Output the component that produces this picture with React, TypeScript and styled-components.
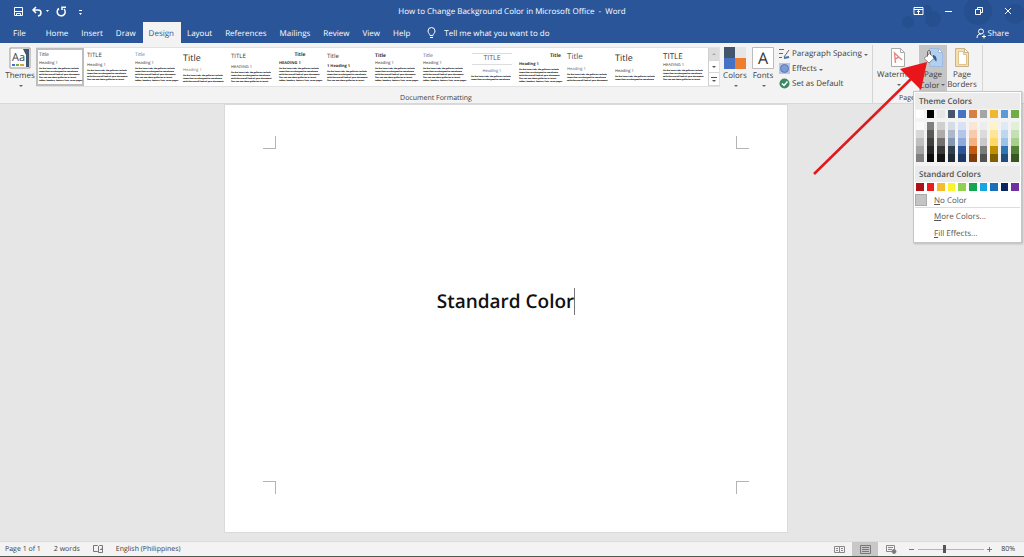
import React from 'react';
import styled, { createGlobalStyle, css } from 'styled-components';

const Global = createGlobalStyle`
  *, *::before, *::after { box-sizing: border-box; }
  body {
    margin: 0;
    font-family: "Open Sans", "Noto Sans", sans-serif;
    font-size: 8px;
    color: #3c3c3c;
    background: #e6e6e6;
    text-rendering: geometricPrecision;
  }
  button, input { font: inherit; color: inherit; text-rendering: inherit; }
  button { border: 0; padding: 0; background: none; }
`;

const Shell = styled.div`
  min-height: 100vh;
  display: flex;
  flex-direction: column;
`;

const Header = styled.header`
  position: relative;
  background: #2a5699;
  color: #fff;
`;

const Blobs = styled.svg`
  position: absolute;
  right: 0;
  top: 0;
`;

const TitleBar = styled.div`
  position: relative;
  height: 22px;
  display: flex;
  align-items: center;
  justify-content: space-between;
`;

const QuickAccess = styled.div`
  display: flex;
  align-items: center;
  padding-left: 13px;
  gap: 7px;
`;

const WindowTitle = styled.h1`
  position: absolute;
  left: 0;
  right: 0;
  margin: 0;
  text-align: center;
  font-size: 8px;
  font-weight: 400;
  white-space: pre;
`;

const WindowControls = styled.div`
  position: relative;
  display: flex;
  gap: 19px;
  padding-right: 10px;
`;

const IconButton = styled.button`
  display: flex;
  align-items: center;
  justify-content: center;
`;

const Tabs = styled.nav`
  position: relative;
  height: 21px;
  display: flex;
  align-items: stretch;
  padding-left: 3px;
`;

const Tab = styled.button<{ $active?: boolean; $wide?: boolean }>`
  padding: 1px ${p => (p.$wide ? 14 : 7)}px 0 ${p => (p.$wide ? 10 : 6)}px;
  font-size: 8px;
  color: ${p => (p.$active ? '#2a5699' : '#fff')};
  background: ${p => (p.$active ? '#f3f3f3' : 'transparent')};
`;

const TellMe = styled.button`
  display: flex;
  align-items: center;
  gap: 8px;
  padding: 1px 0 0 10px;
  font-size: 8px;
  color: #fff;
`;

const Share = styled(TellMe)`
  margin-left: auto;
  padding-right: 15px;
  gap: 2px;
`;

const Ribbon = styled.section`
  height: 61px;
  display: flex;
  background: #f3f3f3;
  border-bottom: 1px solid #d8d8d8;
`;

const Group = styled.div<{ $w: number }>`
  flex: 0 0 ${p => p.$w}px;
  display: flex;
  flex-direction: column;
  justify-content: space-between;
  border-right: 1px solid #d4d4d4;
  margin: 2px 0 0;
`;

const GroupBody = styled.div`
  display: flex;
  align-items: flex-start;
  padding-left: 4px;
`;

const GroupName = styled.div`
  text-align: center;
  font-size: 7px;
  line-height: 8px;
`;

const BigButton = styled.button<{ $w: number; $on?: boolean }>`
  width: ${p => p.$w}px;
  height: 47px;
  display: flex;
  flex-direction: column;
  align-items: center;
  padding-top: 2px;
  font-size: 8px;
  line-height: 10px;
  white-space: nowrap;
  background: ${p => (p.$on ? '#c5c5c5' : 'transparent')};
  svg.pic { margin-bottom: 2px; flex: none; }
`;

const Caret = styled.span`
  display: inline-block;
  width: 0;
  height: 0;
  margin: 4px 1px 2px 2px;
  border: 2px solid transparent;
  border-top-color: #666;
  border-bottom: 0;
`;

const Gallery = styled.div`
  height: 40px;
  margin-top: 2px;
  display: flex;
  background: #fff;
  border: 1px solid #e1e1e1;
  border-left: 0;
`;

const Thumb = styled.button<{ $on?: boolean }>`
  width: 48px;
  height: 38px;
  padding: 2px 3px 0;
  overflow: hidden;
  text-align: left;
  display: flex;
  flex-direction: column;
  justify-content: flex-start;
  ${p => p.$on && css`box-shadow: inset 0 0 0 2px #bdbdbd;`}
`;

const ThumbTitle = styled.span<{ $size: number; $top: number; $color?: string; $align?: string; $rule?: boolean; $bold?: boolean }>`
  margin-top: ${p => p.$top}px;
  font-size: ${p => p.$size}px;
  line-height: 10px;
  color: ${p => p.$color || '#333'};
  text-align: ${p => p.$align || 'left'};
  font-weight: ${p => (p.$bold ? 700 : 400)};
  ${p => p.$rule && css`box-shadow: 0 -2px 0 -1px #ddd, 0 2px 0 -1px #ddd;`}
`;

const ThumbHeading = styled.span<{ $color?: string; $align?: string; $bold?: boolean; $gap: number }>`
  margin-top: ${p => p.$gap}px;
  font-size: 4px;
  line-height: 6px;
  color: ${p => p.$color || '#333'};
  text-align: ${p => p.$align || 'left'};
  font-weight: ${p => (p.$bold ? 700 : 400)};
`;

const ThumbText = styled.span`
  font-size: 2px;
  line-height: 3px;
  font-weight: 800;
  color: #000;
  white-space: pre;
`;

const GalleryScroll = styled.div`
  width: 11px;
  display: flex;
  flex-direction: column;
  border-left: 1px solid #d0d0d0;
`;

const ScrollButton = styled.button<{ $off?: boolean }>`
  flex: 1;
  display: flex;
  align-items: center;
  justify-content: center;
  background: ${p => (p.$off ? '#dcdcdc' : '#fff')};
  border-bottom: 1px solid #d8d8d8;
`;

const SmallButtons = styled.div`
  display: flex;
  flex-direction: column;
  padding: 1px 0 0 3px;
`;

const SmallButton = styled.button`
  height: 15px;
  display: flex;
  align-items: center;
  gap: 2px;
  font-size: 8px;
  white-space: nowrap;
  span { display: flex; align-items: center; }
`;

const Workspace = styled.main`
  flex: 1;
  display: flex;
  justify-content: center;
  padding: 1px 12px 9px 0;
  background: #e6e6e6;
`;

const Sheet = styled.article`
  position: relative;
  width: 562px;
  min-height: 400px;
  background: #fff;
  box-shadow: 0 0 0 1px #dadada;
  padding-bottom: 34px;
  display: flex;
  align-items: center;
  justify-content: center;
`;

const Corner = styled.i<{ $v: 'top' | 'bottom'; $h: 'left' | 'right' }>`
  position: absolute;
  width: 13px;
  height: 13px;
  ${p => p.$v}: ${p => (p.$v === 'top' ? 31 : 38)}px;
  ${p => p.$h}: 38px;
  border: 0 solid #b4b4b4;
  border-${p => (p.$v === 'top' ? 'bottom' : 'top')}-width: 1px;
  border-${p => (p.$h === 'left' ? 'right' : 'left')}-width: 1px;
`;

const DocText = styled.p`
  margin: 0;
  font-size: 19px;
  line-height: 27px;
  font-weight: 600;
  color: #111;
  border-right: 1px solid #777;
`;

const StatusBar = styled.footer`
  height: 16px;
  display: flex;
  align-items: center;
  justify-content: space-between;
  background: #f3f3f3;
  border-top: 1px solid #dcdcdc;
  border-bottom: 1px solid #4d5a50;
  font-size: 7px;
`;

const StatusSide = styled.div<{ $gap: number }>`
  height: 100%;
  display: flex;
  align-items: center;
  gap: ${p => p.$gap}px;
  padding: 0 9px 0 5px;
`;

const ViewButton = styled(IconButton)<{ $on?: boolean }>`
  width: 26px;
  height: 100%;
  background: ${p => (p.$on ? '#c8c8c8' : 'transparent')};
`;

const ZoomSlider = styled.input`
  appearance: none;
  width: 66px;
  height: 10px;
  margin: 0;
  background: linear-gradient(#b5b5b5, #b5b5b5) center / 100% 1px no-repeat;
  &::-webkit-slider-thumb { appearance: none; width: 3px; height: 8px; background: #555; }
`;

const Percent = styled.span`
  padding-left: 5px;
`;

const Menu = styled.div`
  position: absolute;
  top: 91px;
  right: 2px;
  width: 109px;
  padding: 1px;
  background: #fff;
  border: 1px solid #c6c6c6;
  box-shadow: 1px 1px 2px #0003;
`;

const MenuTitle = styled.h2`
  margin: 0;
  padding-left: 4px;
  height: 16px;
  font-size: 8px;
  line-height: 17px;
  font-weight: 600;
  color: #505050;
  background: #ebebeb;
`;

const Swatches = styled.div<{ $bottom?: number; $shade?: boolean }>`
  display: grid;
  grid-template-columns: repeat(10, 1fr);
  column-gap: 3px;
  padding: 1px 1px ${p => p.$bottom || 2}px;
  background: ${p => (p.$shade ? '#f3f3f3' : '#fff')};
`;

const Swatch = styled.button<{ $c: string }>`
  height: 8px;
  background: ${p => p.$c};
`;

const MenuItem = styled.button<{ $line?: boolean }>`
  display: flex;
  align-items: center;
  width: 100%;
  height: ${p => (p.$line ? 18 : 16)}px;
  gap: 7px;
  font-size: 8px;
  color: #555;
  border-top: ${p => (p.$line ? '1px solid #ddd' : '0')};
  &::before { content: ""; width: 12px; height: 12px; }
`;

const NoColor = styled(MenuItem)`
  height: 14px;
  &::before { background: #c4c4c4; border: 1px solid #aaa; }
`;

const Arrow = styled.svg`
  position: absolute;
  top: 60px;
  right: 84px;
  pointer-events: none;
`;

const BODY = [
  'On the Insert tab, the galleries include',
  'items that are designed to coordinate',
  'with the overall look of your document.',
  'You can use these galleries to insert',
  'tables, headers, footers, lists, cover pages',
];

type ThumbSpec = {
  title?: string; size: number; top: number; color?: string; align?: string; bold?: boolean; rule?: boolean;
  heading?: string; hColor?: string; hAlign?: string; hBold?: boolean; gap: number; rows: number; on?: boolean;
};

const THUMBS: ThumbSpec[] = [
  { size: 5, top: 0, gap: 1, rows: 5, on: true },
  { title: 'TITLE', size: 6, top: 0, gap: 3, rows: 4 },
  { size: 5, top: 0, color: '#4a7ab0', gap: 1, rows: 5 },
  { size: 9, top: 3, gap: 5, rows: 3, hColor: '#777' },
  { title: 'TITLE', size: 6, top: 1, gap: 4, rows: 4, heading: 'HEADING 1' },
  { size: 5, top: 0, align: 'center', bold: true, gap: 1, rows: 5, heading: 'HEADING 1', hBold: true },
  { size: 6, top: 1, gap: 3, rows: 4, heading: '1   Heading 1', hBold: true },
  { size: 5, top: 1, bold: true, gap: 0, rows: 5 },
  { size: 5, top: 1, color: '#555577', gap: 0, rows: 5 },
  { title: 'TITLE', size: 7, top: 4, align: 'center', rule: true, gap: 5, rows: 2, color: '#555577', hAlign: 'center', hColor: '#4a6a90' },
  { size: 5, top: 1, align: 'right', bold: true, gap: 1, rows: 5, hBold: true },
  { size: 8, top: 2, color: '#44546a', gap: 5, rows: 3, hColor: '#4a6a90' },
  { size: 9, top: 3, gap: 6, rows: 2 },
  { title: 'TITLE', size: 8, top: 2, gap: 1, rows: 4, heading: 'HEADING 1' },
];

const TOP = ['#ffffff', '#000000', '#e7e6e6', '#44546a', '#4472c4', '#d87f45', '#a5a5a5', '#f0b92d', '#5b9bd5', '#70ad47'];
const SHADES = [
  ['#fafafa', '#7f7f7f', '#d0cece', '#d6dce4', '#d9e2f3', '#fbe5d5', '#ededed', '#fff2cc', '#deebf6', '#e2efd9'],
  ['#d8d8d8', '#595959', '#aeabab', '#adb9ca', '#b4c6e7', '#f7cbac', '#dbdbdb', '#fee599', '#bdd7ee', '#c5e0b3'],
  ['#bfbfbf', '#3f3f3f', '#757070', '#8496b0', '#8eaadb', '#f4b183', '#c9c9c9', '#ffd965', '#9cc3e5', '#a8d08d'],
  ['#a5a5a5', '#262626', '#3a3838', '#323f4f', '#2f5496', '#c55a11', '#7b7b7b', '#bf9000', '#2e75b5', '#538135'],
  ['#7f7f7f', '#0c0c0c', '#171616', '#222a35', '#1f3864', '#833c0b', '#525252', '#7f6000', '#1e4e79', '#375623'],
];
const STANDARD = ['#b01116', '#ee1c1c', '#f5bd2a', '#fbf32b', '#92d050', '#12a650', '#18a5e0', '#1a6fb8', '#0a2560', '#7030a0'];

const WatermarkIcon = () => (
  <svg className="pic" width="22" height="21" viewBox="0 0 22 21" fill="none">
    <path d="M4.500 1.500h9l4 4v14h-13z" fill="#fff" stroke="#aaa" />
    <path d="M13.500 1.500v4h4" stroke="#aaa" />
    <path d="M8.500 16L7.500 6l7.500 7M8 12l4-2" stroke="#e08a80" strokeWidth="1.400" />
  </svg>
);

const PageColorIcon = () => (
  <svg className="pic" width="22" height="21" viewBox="0 0 22 21" fill="none">
    <path d="M7.500 1.500h9l4 4v14h-13z" fill="#b4cfec" stroke="#9dbbe0" />
    <path d="M16.500 1.500v4h4z" fill="#fff" stroke="#9dbbe0" />
    <path d="M2 11.500l5.500-5 5 4.500-5.500 5z" fill="#fff" stroke="#8a8a8a" />
    <path d="M5.500 9.500V5c0-2 3-2 3 0v3" stroke="#666" />
    <path d="M11 8c3 .5 4 3 3.500 6.500-2-.5-2-3-3.500-4z" fill="#2c5f9a" />
  </svg>
);

const BordersIcon = () => (
  <svg className="pic" width="22" height="21" viewBox="0 0 22 21" fill="none">
    <path d="M4.500 1.500h9l4 4v14h-13z" fill="#f6dfae" stroke="#c9b48c" />
    <path d="M7.500 4.500h5v3h3v10h-8z" fill="#fff" stroke="#e0c48c" />
    <path d="M13.500 1.500v4h4z" fill="#fff" stroke="#c9b48c" />
  </svg>
);

export default function App() {
  return (
    <Shell>
      <Global />
      <Header>
        <Blobs width="130" height="43" fill="#1f4785" opacity=".45">
          <circle cx="14" cy="22" r="6" /><circle cx="39" cy="19" r="8" /><circle cx="33" cy="10" r="5" />
          <circle cx="84" cy="11" r="14" /><circle cx="121" cy="14" r="10" />
        </Blobs>
        <TitleBar>
          <WindowTitle>How to Change Background Color in Microsoft Office  -  Word</WindowTitle>
          <QuickAccess>
            <IconButton aria-label="Save">
              <svg width="11" height="11" viewBox="0 0 11 11" fill="none" stroke="#fff"><path d="M1.500 1.500h8v8h-8zM2 5.500h7M3.500 9V7.500h4V9" /></svg>
            </IconButton>
            <IconButton aria-label="Undo">
              <svg width="18" height="11" viewBox="0 0 18 11" fill="none" stroke="#fff" strokeWidth="1.500"><path d="M5 1L2 4l3 3M2 4h5c4 0 4 5 0 6" /><path d="M15 4h3l-1.500 2z" fill="#fff" stroke="none" /></svg>
            </IconButton>
            <IconButton aria-label="Redo">
              <svg width="11" height="11" viewBox="0 0 11 11" fill="none" stroke="#fff" strokeWidth="1.500"><path d="M3 2.500a4 4 0 1 0 5 .5M6 4V1.300h4" /></svg>
            </IconButton>
            <IconButton aria-label="Customize">
              <svg width="14" height="11" viewBox="0 0 14 11" fill="#fff"><path d="M5 4h3v1H5zM5 7h3L6.500 9z" /></svg>
            </IconButton>
          </QuickAccess>
          <WindowControls>
            <IconButton aria-label="Ribbon display options">
              <svg width="11" height="10" viewBox="0 0 11 10" fill="none" stroke="#fff"><path d="M1 1.500h9v7H1zM1 3.500h9M5.500 8V4.500M4 6l1.500-1.500L7 6" /></svg>
            </IconButton>
            <IconButton aria-label="Minimize">
              <svg width="11" height="10" stroke="#fff"><path d="M2 5.500h7" /></svg>
            </IconButton>
            <IconButton aria-label="Restore">
              <svg width="11" height="10" viewBox="0 0 11 10" fill="none" stroke="#fff"><path d="M2.500 3.500h5v5h-5zM4.500 3V1.500h5v5H8" /></svg>
            </IconButton>
            <IconButton aria-label="Close">
              <svg width="11" height="10" stroke="#fff"><path d="M2 2l6 6M8 2L2 8" /></svg>
            </IconButton>
          </WindowControls>
        </TitleBar>
        <Tabs>
          <Tab $wide>File</Tab>
          {['Home', 'Insert', 'Draw', 'Design', 'Layout', 'References', 'Mailings', 'Review', 'View', 'Help'].map(n => (
            <Tab key={n} $active={n === 'Design'}>{n}</Tab>
          ))}
          <TellMe>
            <svg width="9" height="12" viewBox="0 0 9 12" fill="none" stroke="#fff"><path d="M3 8.500C3 7 1 6 1 4a3.500 3.500 0 0 1 7 0c0 2-2 3-2 4.500zM3 10.500h3" /></svg>
            Tell me what you want to do
          </TellMe>
          <Share>
            <svg width="10" height="11" viewBox="0 0 10 11" fill="none" stroke="#fff"><circle cx="5" cy="3.500" r="2.500" /><path d="M1 10c0-3 1.500-4 4-4M6 8.500h4M8 6.500v4" /></svg>
            Share
          </Share>
        </Tabs>
      </Header>

      <Ribbon>
        <Group $w={873}>
          <GroupBody>
            <BigButton $w={32}>
              <svg className="pic" width="22" height="22" viewBox="0 0 22 22" fontFamily="Open Sans">
                <path d="M1 1h20v20H1z" fill="#fff" stroke="#999" />
                <path d="M14 2h6v18h-3V8z" fill="#44546a" />
                <text x="3" y="14" fontSize="11" fill="#444">Aa</text>
                <path d="M3 18h3" stroke="#4472c4" strokeWidth="2" /><path d="M7 18h3" stroke="#70ad47" strokeWidth="2" /><path d="M11 18h4" stroke="#d9a63a" strokeWidth="2" />
              </svg>
              Themes
              <Caret />
            </BigButton>
            <Gallery>
              {THUMBS.map((x, i) => (
                <Thumb key={i} $on={x.on}>
                  <ThumbTitle $size={x.size} $top={x.top} $color={x.color} $align={x.align} $rule={x.rule} $bold={x.bold}>{x.title || 'Title'}</ThumbTitle>
                  <ThumbHeading $color={x.hColor} $align={x.hAlign} $bold={x.hBold} $gap={x.gap}>{x.heading || 'Heading 1'}</ThumbHeading>
                  <ThumbText>{BODY.slice(0, x.rows).join('\n')}</ThumbText>
                </Thumb>
              ))}
              <GalleryScroll>
                <ScrollButton $off aria-label="Up"><svg width="4" height="2" fill="#aaa"><path d="M0 2h4L2 0z" /></svg></ScrollButton>
                <ScrollButton aria-label="Down"><svg width="4" height="2" fill="#555"><path d="M0 0h4L2 2z" /></svg></ScrollButton>
                <ScrollButton aria-label="More"><svg width="6" height="5" fill="#555"><path d="M0 0h6v1H0zM1 3h4L3 5z" /></svg></ScrollButton>
              </GalleryScroll>
            </Gallery>
            <BigButton $w={30}>
              <svg className="pic" width="22" height="22"><path d="M0 0h11v11H0z" fill="#44546a" /><path d="M11 0h11v11H11z" fill="#e7e6e6" /><path d="M0 11h11v11H0z" fill="#4472c4" /><path d="M11 11h11v11H11z" fill="#ed7d31" /></svg>
              Colors
              <Caret />
            </BigButton>
            <BigButton $w={26}>
              <svg className="pic" width="22" height="22" fontFamily="Open Sans"><path d="M.5.500h21v21H.5z" fill="#fff" stroke="#bbb" /><text x="11" y="17" fontSize="16" textAnchor="middle" fill="#333">A</text></svg>
              Fonts
              <Caret />
            </BigButton>
            <SmallButtons>
              <SmallButton>
                <svg width="11" height="11" fill="none" stroke="#666"><path d="M0 1.500h5M0 5.500h4M0 9.500h3M10 2L5 9" /><path d="M5 10l5-1" stroke="#3a75b5" strokeWidth="2" /></svg>
                <span>Paragraph Spacing<Caret /></span>
              </SmallButton>
              <SmallButton>
                <svg width="11" height="11"><path d="M0 0h11v11H0z" fill="#b7c6e6" /><circle cx="5.500" cy="5.500" r="4" fill="#7e9ad0" stroke="#5577bb" /></svg>
                <span>Effects<Caret /></span>
              </SmallButton>
              <SmallButton>
                <svg width="11" height="11" fill="none"><circle cx="5.500" cy="5.500" r="5" fill="#3c8a63" /><path d="M3 5.500l2 2 3.500-4" stroke="#fff" strokeWidth="1.500" /></svg>
                Set as Default
              </SmallButton>
            </SmallButtons>
          </GroupBody>
          <GroupName>Document Formatting</GroupName>
        </Group>
        <Group $w={110}>
          <GroupBody>
            <BigButton $w={42}><WatermarkIcon />Watermark<Caret /></BigButton>
            <BigButton $w={28} $on><PageColorIcon />Page<span>Color<Caret /></span></BigButton>
            <BigButton $w={30}><BordersIcon />Page<span>Borders</span></BigButton>
          </GroupBody>
          <GroupName>Page Background</GroupName>
        </Group>
      </Ribbon>

      <Workspace>
        <Sheet>
          <Corner $v="top" $h="left" /><Corner $v="top" $h="right" />
          <Corner $v="bottom" $h="left" /><Corner $v="bottom" $h="right" />
          <DocText>Standard Color</DocText>
        </Sheet>
      </Workspace>

      <StatusBar>
        <StatusSide $gap={13}>
          <span>Page 1 of 1</span>
          <span>2 words</span>
          <svg width="10" height="9" fill="none" stroke="#777"><path d="M.5.500h4l1 1v6l-1-1h-4zM5.500 1.500l1-1h3v7h-4M7 4l1 1 2-3" /></svg>
          <span>English (Philippines)</span>
        </StatusSide>
        <StatusSide $gap={0}>
          <ViewButton aria-label="Read mode"><svg width="11" height="9" fill="none" stroke="#888"><path d="M.5 1.500h10v6H.5zM5.500 1v7M2 3.500h2M2 5.500h2M7 3.500h2M7 5.500h2" /></svg></ViewButton>
          <ViewButton $on aria-label="Print layout"><svg width="11" height="9" fill="none" stroke="#777"><path d="M.5.500h10v8H.5zM2 2.500h7M2 4.500h7M2 6.500h7" /></svg></ViewButton>
          <ViewButton aria-label="Web layout"><svg width="11" height="9" fill="none" stroke="#888"><path d="M.5.500h8v6h-8zM2 2.500h5M2 4.500h4" /><circle cx="8" cy="6.500" r="2" fill="#777" /></svg></ViewButton>
          <IconButton aria-label="Zoom out"><svg width="14" height="9" stroke="#777"><path d="M5 4.500h5" /></svg></IconButton>
          <ZoomSlider type="range" aria-label="Zoom" min="0" max="100" defaultValue="39" />
          <IconButton aria-label="Zoom in"><svg width="12" height="9" stroke="#777"><path d="M3 4.500h5M5.500 2v5" /></svg></IconButton>
          <Percent>80%</Percent>
        </StatusSide>
      </StatusBar>

      <Menu>
        <MenuTitle>Theme Colors</MenuTitle>
        <Swatches $shade $bottom={3}>{TOP.map(c => <Swatch key={c} $c={c} aria-label={c} />)}</Swatches>
        <Swatches $shade $bottom={4}>{SHADES.flat().map((c, i) => <Swatch key={i} $c={c} aria-label={c} />)}</Swatches>
        <MenuTitle>Standard Colors</MenuTitle>
        <Swatches>{STANDARD.map(c => <Swatch key={c} $c={c} aria-label={c} />)}</Swatches>
        <NoColor><span><u>N</u>o Color</span></NoColor>
        <MenuItem $line><span><u>M</u>ore Colors...</span></MenuItem>
        <MenuItem><span><u>F</u>ill Effects...</span></MenuItem>
      </Menu>

      <Arrow width="130" height="116" viewBox="0 0 130 116">
        <path d="M4 114L104 16" stroke="#e0191d" strokeWidth="2.500" />
        <path d="M117 2L111 30L90 9z" fill="#e8151b" />
      </Arrow>
    </Shell>
  );
}
